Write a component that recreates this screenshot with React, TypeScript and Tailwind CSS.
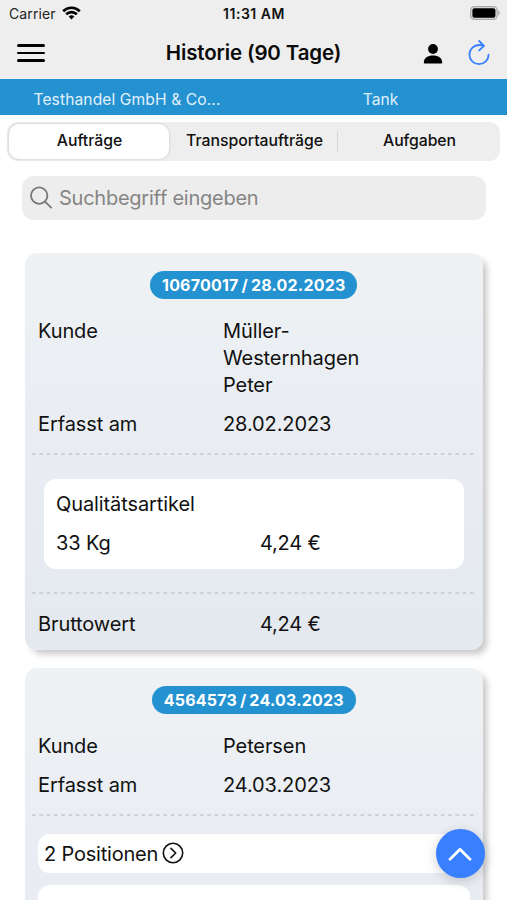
import type { ReactNode } from "react";

function StatusBar() {
  return (
    <div className="flex h-[28px] items-center justify-between pl-[9px] pr-[7px] text-[14px] leading-none">
      <div className="flex w-[120px] items-center gap-[6px]">
        <span className="tracking-[0.1px] text-[#222]">Carrier</span>
        <svg width="19" height="14" viewBox="0 0 19 14" fill="none" stroke="#000" strokeWidth="2.7" className="-mt-[2px]">
          <path d="M1.2 5.2a11.7 11.7 0 0 1 16.6 0" />
          <path d="M4.2 8.3a7.5 7.5 0 0 1 10.6 0" />
          <path d="M9.5 13.4 6.7 10.5a4 4 0 0 1 5.6 0Z" fill="#000" stroke="none" />
        </svg>
      </div>
      <span className="mr-px font-semibold tracking-[0.5px] text-[#111]">11:31 AM</span>
      <div className="flex w-[120px] justify-end">
        <svg width="30" height="14" viewBox="0 0 30 14" className="-mt-[2px]">
          <rect x="0.6" y="0.6" width="26.6" height="12.8" rx="3.8" fill="#ddd" stroke="#aaa" strokeWidth="1.2" />
          <rect x="2.4" y="2.3" width="23" height="9.4" rx="2" />
          <path d="M28.3 4.6c2 .6 2 4.2 0 4.8Z" fill="#aaa" />
        </svg>
      </div>
    </div>
  );
}

function Header() {
  return (
    <div className="flex h-[51px] items-center justify-between pb-[2px] pl-[17px] pr-[17px]">
      <div className="mt-px flex w-[72px] flex-col gap-[5px]">
        <div className="h-[2.4px] w-[28px] rounded-full bg-black" />
        <div className="h-[2.4px] w-[28px] rounded-full bg-black" />
        <div className="h-[2.4px] w-[28px] rounded-full bg-black" />
      </div>
      <h1 className="mt-[2px] text-[20.5px] font-semibold tracking-[-0.15px] text-[#0a0a0a]">Historie (90 Tage)</h1>
      <div className="flex w-[72px] items-center justify-end gap-[25px]">
        <svg width="20" height="20" viewBox="0 0 20 20" className="mt-[2px]">
          <circle cx="10" cy="5" r="4.9" />
          <path d="M.8 18.6c0-4.8 4-7.1 9.2-7.1s9.2 2.3 9.2 7.1c0 .6-.3.9-.9.9H1.7c-.6 0-.9-.3-.9-.9Z" />
        </svg>
        <svg width="22" height="26" viewBox="0 0 22 26" fill="none" stroke="#3880ff" strokeWidth="1.8" strokeLinecap="round" strokeLinejoin="round">
          <path d="M15.6 5.8C14.2 5.2 12.6 5 11 5A9.6 9.6 0 1 0 20.6 14.6" />
          <path d="m11.2 1 4.7 4.8-4.7 4.6" />
        </svg>
      </div>
    </div>
  );
}

function Segments() {
  return (
    <div className="mx-[7px] mt-[7px] flex h-[39px] rounded-[11px] bg-[#eee] p-[2px] text-[15.8px] font-medium text-[#111]">
      <div className="flex w-[160px] items-center justify-center rounded-[10px] bg-white pb-px pl-px shadow-[0_0_3px_rgba(0,0,0,0.18)]">Aufträge</div>
      <div className="flex w-[168px] items-center justify-center pb-px pl-[3px]">Transportaufträge</div>
      <div className="my-[7px] w-px bg-[#d5d5d5]" />
      <div className="flex flex-1 items-center justify-center pb-px pl-[3px] tracking-[-0.1px]">Aufgaben</div>
    </div>
  );
}

function Row({ label, children }: { label: string; children: ReactNode }) {
  return (
    <div className="mb-[12px] flex px-[13px] leading-[27px]">
      <div className="w-[185px]">{label}</div>
      <div className="w-[150px]">{children}</div>
    </div>
  );
}

function Divider() {
  return (
    <svg className="ml-[6.5px] block h-[2px] w-[445px]" viewBox="0 0 445 2">
      <line x1="0" y1="1" x2="445" y2="1" stroke="#c5c8cc" strokeWidth="1.6" strokeDasharray="3.7 3.6" />
    </svg>
  );
}

function Card({ title, className, children }: { title: string; className: string; children: ReactNode }) {
  return (
    <section
      className={`ml-[25px] w-[457.5px] rounded-[12px] bg-linear-to-b from-[#eef2f4] via-[#e9edf3] to-[#e4e8ef] pt-[18px] text-[20px] tracking-[-0.1px] text-[#111] shadow-[5px_5px_6px_-1px_rgba(0,0,0,0.22)] ${className}`}
    >
      <div className="mb-[19px] flex justify-center">
        <span className="flex h-[28px] items-center rounded-full bg-[#2492d1] px-[12px] text-[16px] font-bold tracking-[0.2px] [word-spacing:-1px] text-white">{title}</span>
      </div>
      {children}
    </section>
  );
}

export default function App() {
  return (
    <div className="relative h-[900px] w-[507px] overflow-hidden bg-white font-['Inter',sans-serif]">
      <div className="bg-[#eee]">
        <StatusBar />
        <Header />
      </div>
      <div className="flex h-[36px] items-center bg-[#2492d1] pt-[5px] text-[15.6px] text-[#e0f0fa]">
        <div className="w-[254px] text-center tracking-[0.1px]">Testhandel GmbH &amp; Co...</div>
        <div className="w-[253px] text-center">Tank</div>
      </div>
      <Segments />
      <div className="ml-[22px] mt-[15px] flex h-[44px] w-[464px] items-center gap-[7px] rounded-[12px] bg-[#ededed] pl-[8px] text-[20px] tracking-[-0.25px] text-[#858585]">
        <svg width="22" height="23" viewBox="0 0 22 23" fill="none" stroke="#777" strokeWidth="1.8" strokeLinecap="round" className="-mt-px">
          <circle cx="9.2" cy="9.6" r="8.2" />
          <path d="m15 15.6 6.2 6" />
        </svg>
        Suchbegriff eingeben
      </div>

      <Card title="10670017 / 28.02.2023" className="mt-[33px] h-[397px]">
        <Row label="Kunde">Müller-Westernhagen Peter</Row>
        <Row label="Erfasst am">28.02.2023</Row>
        <div className="mt-[15px]"><Divider /></div>
        <div className="ml-[18.5px] mt-[24px] h-[90px] w-[420.5px] rounded-[12px] bg-white px-[12.5px] pt-[12px] leading-[27px]">
          <div className="mb-[12px]">Qualitätsartikel</div>
          <div className="flex">
            <div className="w-[204px]">33 Kg</div>
            <div className="tracking-[-0.2px]">4,24 €</div>
          </div>
        </div>
        <div className="mt-[23px]"><Divider /></div>
        <div className="mt-[17px] flex px-[13px] leading-[27px]">
          <div className="w-[222px]">Bruttowert</div>
          <div className="tracking-[-0.2px]">4,24 €</div>
        </div>
      </Card>

      <Card title="4564573 / 24.03.2023" className="mt-[18px] h-[420px]">
        <Row label="Kunde">Petersen</Row>
        <Row label="Erfasst am">24.03.2023</Row>
        <div className="mt-[15px]"><Divider /></div>
        <div className="ml-[12.5px] mt-[18px] flex h-[39px] w-[432px] items-center gap-[5px] rounded-[12px] bg-white px-[6.5px] tracking-[-0.2px]">
          2 Positionen
          <svg width="22" height="22" viewBox="0 0 22 22" fill="none" stroke="#111" strokeWidth="1.6" strokeLinecap="round" strokeLinejoin="round" className="-ml-px -mt-[2px]">
            <circle cx="11" cy="11" r="9.7" />
            <path d="m9 6.4 4.7 4.6L9 15.6" />
          </svg>
        </div>
        <div className="ml-[12.5px] mt-[12px] h-[90px] w-[432px] rounded-[12px] bg-white" />
      </Card>

      <button className="absolute left-[436px] top-[829px] flex h-[49px] w-[49px] items-center justify-center rounded-full bg-[#3880ff] pr-px shadow-[0_3px_12px_rgba(0,0,0,0.18)]">
        <svg width="24" height="14" viewBox="0 0 24 14" fill="none" stroke="#fff" strokeWidth="2.8" strokeLinecap="round" strokeLinejoin="round">
          <path d="M2 12.2 12 2.2l10 10" />
        </svg>
      </button>
    </div>
  );
}
